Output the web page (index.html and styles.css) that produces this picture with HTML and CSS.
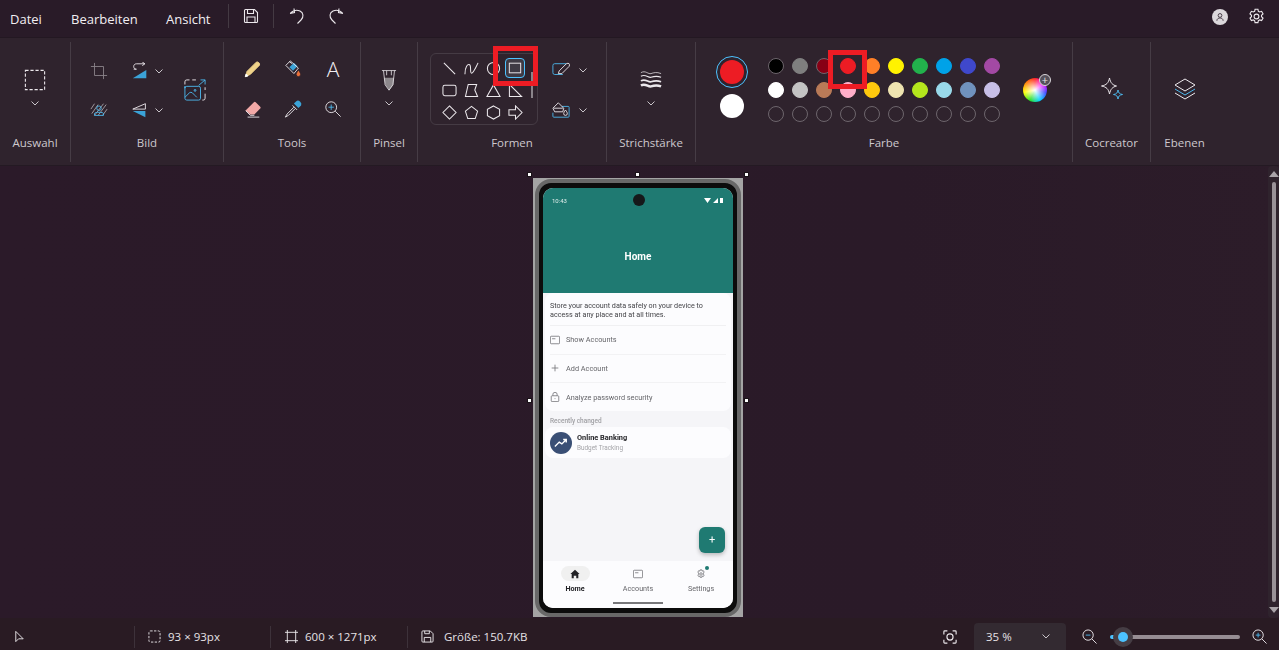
FILE: index.html
```html
<!DOCTYPE html>
<html lang="de">
<head>
    <meta charset="UTF-8">
    <meta name="viewport" content="width=device-width, initial-scale=1.0">
    <title>Paint</title>
    <link rel="stylesheet" href="styles.css">
</head>
<body>
    <div id="app">
        <header id="menu-bar">
            <nav id="menu">
                <span class="menu-item menu-file">Datei</span>
                <span class="menu-item menu-edit">Bearbeiten</span>
                <span class="menu-item menu-view">Ansicht</span>
            </nav>
            <span class="menu-divider"></span>
            <svg class="menu-icon" viewBox="0 0 16 16"><path d="M1.500 2.500a1 1 0 0 1 1-1h9l3 3v9a1 1 0 0 1-1 1h-11a1 1 0 0 1-1-1z M4.500 1.500v4h6v-4 M4 14.500v-5.500h8v5.500"/></svg>
            <span class="menu-divider"></span>
            <svg class="menu-icon undo" viewBox="0 0 16 16"><path d="M1 5.500l4.500-1-.5-4 M1.500 5c2.500-2.500 6-3.500 9.500-2 3.500 1.800 4 6 1 9l-3.500 3.500"/></svg>
            <svg class="menu-icon redo" viewBox="0 0 16 16"><path d="M15 5.500l-4.500-1 .5-4 M14.500 5c-2.500-2.500-6-3.500-9.500-2-3.500 1.800-4 6-1 9l3.500 3.500"/></svg>
            <div id="account">
                <span class="avatar">
                    <svg viewBox="0 0 16 16"><circle cx="8" cy="5.500" r="3"/><path d="M3 14c0-6 10-6 10 0"/></svg>
                </span>
                <svg class="gear" viewBox="0 0 20 20"><path d="M8.300 1.500h3.400l.5 2.400 1.500.8 2.300-.8 1.700 3-1.800 1.600v1.700l1.800 1.600-1.700 3-2.300-.8-1.500.8-.5 2.400h-3.400l-.5-2.400-1.500-.8-2.300.8-1.700-3 1.800-1.600v-1.700l-1.800-1.600 1.700-3 2.300.8 1.500-.8z"/><circle cx="10" cy="10" r="2.800"/></svg>
            </div>
        </header>

        <section id="ribbon">
            <div class="group group-select">
                <div class="group-body stack">
                    <svg class="big-icon" viewBox="0 0 24 24"><rect class="dashed" x="1.500" y="1.500" width="21" height="21"/></svg>
                    <svg class="chev" viewBox="0 0 8 5"><path d="M.5.500l3.500 3.500 3.500-3.500"/></svg>
                </div>
                <div class="group-label">Auswahl</div>
            </div>

            <div class="group group-image">
                <div class="group-body image-tools">
                    <div class="tool-grid image-grid">
                        <svg class="tool-icon dim" viewBox="0 0 20 20"><path d="M5 1v14h14 M1 5h14v14"/></svg>
                        <div class="split">
                            <svg class="tool-icon" viewBox="0 0 20 20"><path class="blue" d="M2 18l15-9v9z"/><path d="M15 2h-9c-4 0-4 6 0 6h-3 M12.500 0l3 2-3 2"/></svg>
                            <svg class="chev" viewBox="0 0 8 5"><path d="M.5.500l3.500 3.500 3.500-3.500"/></svg>
                        </div>
                        <svg class="tool-icon" viewBox="0 0 20 20"><path class="hatch" d="M2 14l7-10 M5 16l10-13 M9 16l9-12 M1 9l4-6 M14 16l5-7"/><circle class="blue-line" cx="10" cy="8" r="2.500"/><path class="blue-line" d="M5 16v-2c0-2 10-2 10 0v2z"/></svg>
                        <div class="split">
                            <svg class="tool-icon" viewBox="0 0 20 20"><path d="M2 9l14-6v6z"/><path class="blue" d="M2 11h14v7z"/></svg>
                            <svg class="chev" viewBox="0 0 8 5"><path d="M.5.500l3.500 3.500 3.500-3.500"/></svg>
                        </div>
                    </div>
                    <svg class="resize-icon" viewBox="0 0 24 24"><path class="blue-line" d="M1 8v13q0 2 2 2h13q2 0 2-2v-11q0-2-2-2h-13q-2 0-2 2z M1 20l5-5q1.500-1 3 0l3 3 2 2 M12 11.500a1 1 0 1 0 .1 0 M16 7l7-6 M18 1h5v5"/><path d="M1 6v-3q0-2 2-2h3 M9 1h4 M23 9v3 M23 16v5q0 2-2 2h-1"/></svg>
                </div>
                <div class="group-label">Bild</div>
            </div>

            <div class="group group-tools">
                <div class="group-body">
                    <div class="tool-grid tools-grid">
                        <svg class="tool-icon" viewBox="0 0 20 20"><path class="pencil" d="M1.500 18.500l2-6 10-10q1.500-1 3 .5t.5 3l-10 10z"/><path class="tip" d="M1.500 18.500l.8-3 2.200 2.200z"/></svg>
                        <svg class="tool-icon" viewBox="0 0 20 20"><path class="blue" d="M6 8l5-5 4 4-5 5z"/><path d="M2 6l5-5 9 8-5 6z M6 2l3 2"/><path class="drop" d="M16 11c-2 3-2.500 4-2.500 5a2.500 2.500 0 0 0 5 0c0-1-.5-2-2.500-5z"/></svg>
                        <span class="text-tool">A</span>
                        <svg class="tool-icon" viewBox="0 0 20 20"><path class="eraser" d="M2 11.500l9-9q1-1 2 0l5 5q1 1 0 2l-6.500 6.500h-4.500l-5-4q-1-.500 0-.500z"/><path d="M2 12l5 5h4.500 M4 19h13"/></svg>
                        <svg class="tool-icon" viewBox="0 0 20 20"><path class="blue" d="M11 4l3-3q2-1 4 1t1 4l-3 3z"/><path d="M9.500 6l5 5 M11 8l-7.500 7.500-2 3.500 3.500-2 7.500-7.500"/></svg>
                        <svg class="tool-icon" viewBox="0 0 20 20"><circle cx="8" cy="8" r="6"/><path d="M12.500 12.500l6 6"/><path class="blue-line" d="M8 5v6 M5 8h6"/></svg>
                    </div>
                </div>
                <div class="group-label">Tools</div>
            </div>

            <div class="group group-brush">
                <div class="group-body stack">
                    <svg class="big-icon" viewBox="0 0 24 28"><path class="brush-fill" d="M5.500 11h13l-1 9-5 7-5-7z"/><path d="M3 2h18 M5 2l2 18 5 7 5-7 2-18 M9 2v6 M15 2v6"/></svg>
                    <svg class="chev" viewBox="0 0 8 5"><path d="M.5.500l3.500 3.500 3.500-3.500"/></svg>
                </div>
                <div class="group-label">Pinsel</div>
            </div>

            <div class="group group-shapes">
                <div class="group-body shapes-body">
                    <div class="gallery">
                        <svg class="shape" viewBox="0 0 16 16"><path d="M2 2l12 12"/></svg>
                        <svg class="shape" viewBox="0 0 16 16"><path d="M1 14c0-8 3-11 5-10s0 9 2 9 4-5 7-11"/></svg>
                        <svg class="shape" viewBox="0 0 16 16"><circle cx="8" cy="8" r="6.500"/></svg>
                        <svg class="shape selected" viewBox="0 0 16 16"><rect x="1.500" y="2.500" width="13" height="11"/></svg>
                        <svg class="shape" viewBox="0 0 16 16"><rect x="1" y="2.500" width="14" height="11" rx="2"/></svg>
                        <svg class="shape" viewBox="0 0 16 16"><path d="M1.500 14.500l3-13h9l-2 6 3 7z"/></svg>
                        <svg class="shape" viewBox="0 0 16 16"><path d="M8 2l7 12.500h-14z"/></svg>
                        <svg class="shape" viewBox="0 0 16 16"><path d="M1.500 1.500l13 13h-13z"/></svg>
                        <svg class="shape" viewBox="0 0 16 16"><path d="M8 1l7 7-7 7-7-7z"/></svg>
                        <svg class="shape" viewBox="0 0 16 16"><path d="M8 1.500l6.500 5-2.500 8h-8l-2.500-8z"/></svg>
                        <svg class="shape" viewBox="0 0 16 16"><path d="M8 1l6.500 3.500v7l-6.500 3.500-6.500-3.500v-7z"/></svg>
                        <svg class="shape" viewBox="0 0 16 16"><path d="M1 5h7v-4l7 7-7 7v-4h-7z"/></svg>
                        <span class="gallery-bar"></span>
                    </div>
                    <div class="shape-style">
                        <div class="split">
                            <svg class="tool-icon" viewBox="0 0 20 20"><path class="blue-line" d="M12 15h-9q-2 0-2-2v-8q0-2 2-2h13"/><path d="M7 14l1-3 8-8q2-1 3 0t0 3l-8 8z"/></svg>
                            <svg class="chev" viewBox="0 0 8 5"><path d="M.5.500l3.500 3.500 3.500-3.500"/></svg>
                        </div>
                        <div class="split">
                            <svg class="tool-icon" viewBox="0 0 20 20"><path class="blue-line" d="M11 6h7q1 0 1 1v10q0 1-1 1h-16q-1 0-1-1v-4"/><path d="M1 8l6-6 6 6-1 4h-9z M2 8h10"/><path d="M15 10c-1.500 2-2 3-2 4a2 2 0 0 0 4 0c0-1-.5-2-2-4z"/></svg>
                            <svg class="chev" viewBox="0 0 8 5"><path d="M.5.500l3.500 3.500 3.500-3.500"/></svg>
                        </div>
                    </div>
                </div>
                <div class="group-label">Formen</div>
            </div>

            <div class="group group-stroke">
                <div class="group-body stack">
                    <svg class="big-icon" viewBox="0 0 24 20"><path class="w1" d="M1 2c5-3 8 2 11 1s6-2 11 0"/><path class="w2" d="M1 6c5-3 8 2 11 1s6-2 11 0"/><path class="w3" d="M1 11c5-3 8 2 11 1s6-2 11 0"/><path class="w4" d="M1 16c5-3 8 2 11 1s6-2 11 0"/></svg>
                    <svg class="chev" viewBox="0 0 8 5"><path d="M.5.500l3.500 3.500 3.500-3.500"/></svg>
                </div>
                <div class="group-label">Strichstärke</div>
            </div>

            <div class="group group-color">
                <div class="group-body color-body">
                    <div class="active-colors">
                        <span class="active-ring"><span class="active-one"></span></span>
                        <span class="active-two"></span>
                    </div>
                    <div class="palette">
                        <span class="swatch black"></span><span class="swatch gray"></span><span class="swatch darkred"></span><span class="swatch red"></span><span class="swatch orange"></span><span class="swatch yellow"></span><span class="swatch green"></span><span class="swatch sky"></span><span class="swatch indigo"></span><span class="swatch purple"></span>
                        <span class="swatch white"></span><span class="swatch silver"></span><span class="swatch brown"></span><span class="swatch pink"></span><span class="swatch gold"></span><span class="swatch cream"></span><span class="swatch lime"></span><span class="swatch ice"></span><span class="swatch steel"></span><span class="swatch lavender"></span>
                        <span class="swatch"></span><span class="swatch"></span><span class="swatch"></span><span class="swatch"></span><span class="swatch"></span><span class="swatch"></span><span class="swatch"></span><span class="swatch"></span><span class="swatch"></span><span class="swatch"></span>
                    </div>
                    <span class="wheel"><span class="wheel-plus">+</span></span>
                </div>
                <div class="group-label">Farbe</div>
            </div>

            <div class="group group-cocreator">
                <div class="group-body center">
                    <svg class="wide-icon" viewBox="0 0 24 24"><path d="M9.500 1c1 5 3 7 7 8-4 1-6 3-7 8-1-5-3-7-8-8 5-1 7-3 8-8z"/><path class="blue-line" d="M18 13c.5 3 1.500 4 4.500 4.500-3 .5-4 1.500-4.500 4.500-.5-3-1.500-4-4.500-4.500 3-.5 4-1.500 4.500-4.500z"/></svg>
                </div>
                <div class="group-label">Cocreator</div>
            </div>

            <div class="group group-layers">
                <div class="group-body center">
                    <svg class="wide-icon" viewBox="0 0 24 24"><path d="M12 2l10 6-10 6-10-6z"/><path class="blue-line" d="M2 12l10 6 10-6"/><path d="M2 16l10 6 10-6"/></svg>
                </div>
                <div class="group-label">Ebenen</div>
            </div>

            <span class="marker marker-shape"></span>
            <span class="marker marker-color"></span>
        </section>

        <main id="canvas">
            <div id="stage">
                <div class="picture">
                    <span class="handle h-tl"></span><span class="handle h-tc"></span><span class="handle h-tr"></span>
                    <span class="handle h-ml"></span><span class="handle h-mr"></span>
                    <div class="phone">
                        <div class="bezel">
                            <div class="screen">
                                <div class="app-head">
                                    <div class="status-row">
                                        <span>10:43</span>
                                        <span class="camera"></span>
                                        <svg class="status-icons" viewBox="0 0 20 7"><path d="M0 1h7l-3.500 5z M9 6l5-5v5z M16 1h3v5h-3z"/></svg>
                                    </div>
                                    <div class="app-title">Home</div>
                                </div>
                                <div class="app-body">
                                    <div class="card main-card">
                                        <p class="intro">Store your account data safely on your device to access at any place and at all times.</p>
                                        <div class="row">
                                            <svg viewBox="0 0 12 12"><rect x=".5" y="1.500" width="11" height="9" rx="1"/><path d="M2.500 4.500h4"/></svg>
                                            Show Accounts
                                        </div>
                                        <div class="row">
                                            <svg viewBox="0 0 12 12"><path d="M6 2v8 M2 6h8"/></svg>
                                            Add Account
                                        </div>
                                        <div class="row">
                                            <svg viewBox="0 0 12 12"><rect x="1.500" y="4.500" width="9" height="7" rx="1"/><path d="M3.500 4.500v-2q0-2 2.500-2t2.500 2v2 M6 7.500v1"/></svg>
                                            Analyze password security
                                        </div>
                                    </div>
                                    <div class="recent-title">Recently changed</div>
                                    <div class="card recent-card">
                                        <span class="bank-logo">
                                            <svg viewBox="0 0 16 16"><path d="M1 12l5-5 3 2 5-5 M10.500 4h3.500v3.500"/></svg>
                                        </span>
                                        <div>
                                            <div class="bank-name">Online Banking</div>
                                            <div class="bank-sub">Budget Tracking</div>
                                        </div>
                                    </div>
                                    <span class="fab">+</span>
                                </div>
                                <div class="app-nav">
                                    <div class="nav-item nav-active">
                                        <span class="nav-pill"><svg viewBox="0 0 12 12"><path class="solid" d="M6 1l5.500 5h-1.500v5h-2.500v-3h-3v3h-2.500v-5h-1.500z"/></svg></span>
                                        Home
                                    </div>
                                    <div class="nav-item">
                                        <span class="nav-pill"><svg viewBox="0 0 12 12"><rect x=".5" y="1.500" width="11" height="9" rx="1"/><path d="M2.500 4.500h4"/></svg></span>
                                        Accounts
                                    </div>
                                    <div class="nav-item">
                                        <span class="nav-pill"><svg viewBox="0 0 12 12"><path d="M5 1h2l.3 1.500 1.500-.5 1 1.700-1 1.100v1.400l1 1.100-1 1.700-1.500-.5-.3 1.500h-2l-.3-1.500-1.500.5-1-1.700 1-1.100v-1.400l-1-1.100 1-1.700 1.500.5z"/><circle cx="6" cy="6" r="1.500"/></svg><i class="nav-dot"></i></span>
                                        Settings
                                    </div>
                                </div>
                                <span class="home-bar"></span>
                            </div>
                        </div>
                    </div>
                </div>
            </div>
            <aside id="scrollbar">
                <span class="arrow-up"></span>
                <span class="scroll-thumb"></span>
                <span class="arrow-down"></span>
            </aside>
        </main>

        <footer id="status-bar">
            <div class="stat stat-cursor">
                <svg viewBox="0 0 14 14"><path d="M3 1.500v11l3-3h5z"/></svg>
            </div>
            <div class="stat stat-select">
                <svg viewBox="0 0 14 14"><rect class="dashed-small" x="1" y="1" width="12" height="12" rx="1.500"/></svg>
                <span>93 × 93px</span>
            </div>
            <div class="stat stat-canvas">
                <svg viewBox="0 0 14 14"><path d="M2.500 0v14 M11.500 0v14 M0 2.500h14 M0 11.500h14"/></svg>
                <span>600 × 1271px</span>
            </div>
            <div class="stat stat-size">
                <svg viewBox="0 0 14 14"><path d="M1 2q0-1 1-1h8l3 3v8q0 1-1 1h-10q-1 0-1-1z M4 1v3h5v-3 M3.500 13v-5h7v5"/></svg>
                <span>Größe: 150.7KB</span>
            </div>
            <div class="zoom-area">
                <svg class="focus" viewBox="0 0 16 16"><path d="M1 5v-3q0-1 1-1h3 M11 1h3q1 0 1 1v3 M15 11v3q0 1-1 1h-3 M5 15h-3q-1 0-1-1v-3"/><circle cx="8" cy="8" r="3.500"/></svg>
                <div class="zoom-select">
                    <span>35 %</span>
                    <svg class="chev" viewBox="0 0 8 5"><path d="M.5.500l3.500 3.500 3.500-3.500"/></svg>
                </div>
                <svg class="zoom-glass" viewBox="0 0 16 16"><circle cx="6.500" cy="6.500" r="5.500"/><path d="M10.500 10.500l5 5"/><path class="blue-line" d="M4 6.500h5"/></svg>
                <div class="slider">
                    <span class="slider-fill"></span>
                    <span class="slider-track"></span>
                    <span class="slider-thumb"></span>
                </div>
                <svg class="zoom-glass" viewBox="0 0 16 16"><circle cx="6.500" cy="6.500" r="5.500"/><path d="M10.500 10.500l5 5"/><path class="blue-line" d="M4 6.500h5 M6.500 4v5"/></svg>
            </div>
        </footer>
    </div>
</body>
</html>
```

FILE: styles.css
```css
* {
    box-sizing: border-box;
}

html, body {
    margin: 0;
    padding: 0;
    height: 100%;
    overflow: hidden;
}

body {
    font-family: "Open Sans", "Noto Sans", sans-serif;
    background-color: #2a1b28;
    color: #f2eef2;
}

svg {
    display: block;
    fill: none;
    stroke: #ece8ec;
    stroke-width: 1;
    flex: none;
}

#app {
    display: flex;
    flex-direction: column;
    width: 1279px;
    height: 650px;
}

/* top menu */
#menu-bar {
    display: flex;
    align-items: center;
    height: 38px;
    flex: none;
    background-color: #291b28;
    border-bottom: 1px solid #231822;
}

#menu {
    display: flex;
    padding-left: 10px;
    font-size: 13px;
}

.menu-file { width: 61px; }
.menu-edit { width: 95px; }
.menu-view { width: 62px; }

.menu-divider {
    width: 1px;
    height: 24px;
    margin-bottom: 5px;
    background-color: #443a43;
}

.menu-icon {
    width: 16px;
    height: 16px;
    margin: 0 14px 5px;
    stroke-width: 1.100;
}

.menu-icon.undo {
    margin: 0 0 5px 15px;
}

.menu-icon.redo {
    margin: 0 0 5px 23px;
}

#account {
    display: flex;
    align-items: center;
    margin-left: auto;
    padding: 0 14px 4px 0;
    gap: 20px;
}

.avatar {
    display: flex;
    align-items: center;
    justify-content: center;
    width: 16px;
    height: 16px;
    margin-left: -1px;
    border-radius: 50%;
    background-color: #dcd8dc;
}

.avatar svg {
    width: 10px;
    height: 10px;
    stroke: #4a3f49;
    stroke-width: 1.600;
}

.gear {
    width: 17px;
    height: 17px;
    stroke-width: 1.300;
}

/* ribbon */
#ribbon {
    position: relative;
    display: flex;
    height: 128px;
    flex: none;
    padding: 4px 0;
    background-color: #2f232d;
    border-bottom: 1px solid #241a23;
}

.group {
    display: flex;
    flex-direction: column;
    height: 120px;
    border-right: 1px solid #463c45;
    flex: none;
}

.group-select { width: 71px; }
.group-image { width: 153px; }
.group-tools { width: 137px; }
.group-brush { width: 57px; }
.group-shapes { width: 189px; }
.group-stroke { width: 89px; }
.group-color { width: 377px; }
.group-cocreator { width: 78px; }
.group-layers { width: 67px; border-right: none; }

.group-body {
    height: 91px;
    flex: none;
}

.group-label {
    text-align: center;
    font-size: 11.500px;
    line-height: 18px;
    color: #cdc8cd;
    margin-top: 1px;
}

.stack {
    display: flex;
    flex-direction: column;
    align-items: center;
    padding-top: 27px;
}

.big-icon {
    width: 22px;
    height: 22px;
}

.stack .chev {
    margin-top: 10px;
}

.chev {
    width: 8px;
    height: 5px;
    stroke: #c9c4c9;
}

.dashed {
    stroke-dasharray: 3.500 2;
    stroke-width: 1.200;
}

.dashed-small {
    stroke-dasharray: 2.500 1.500;
}

.tool-grid {
    display: grid;
}

.tool-icon {
    width: 18px;
    height: 18px;
}

.blue {
    fill: #3ba3d8;
    stroke: none;
}

.blue-line {
    stroke: #4cb8ec;
    fill: none;
}

.dim {
    stroke: #8a8289;
}

.hatch {
    stroke: #a9a3a8;
}

.split {
    display: flex;
    align-items: center;
    gap: 6px;
}

.image-tools {
    display: flex;
    padding: 18px 0 0 19px;
}

.image-grid {
    grid-template-columns: 41px 60px;
    grid-template-rows: 22px 22px;
    row-gap: 17px;
    align-items: center;
}

.resize-icon {
    width: 22px;
    height: 22px;
    margin-top: 19px;
    margin-left: -7px;
}

.tools-grid {
    grid-template-columns: 40px 40px 40px;
    grid-template-rows: 22px 22px;
    row-gap: 18px;
    justify-items: center;
    align-items: center;
    padding: 16px 0 0 9px;
}

.text-tool {
    font-family: "Open Sans", sans-serif;
    font-weight: 300;
    font-size: 21px;
    line-height: 22px;
}

.pencil {
    fill: #f0d38a;
    stroke: #f0d38a;
}

.tip {
    fill: #fff;
    stroke: #fff;
}

.eraser {
    fill: #f2a8a6;
    stroke: none;
}

.drop {
    fill: #e8703a;
    stroke: #2f232d;
}

.brush-fill {
    fill: #8d888c;
    stroke: none;
}

/* shapes */
.shapes-body {
    display: flex;
    padding: 11px 0 0 12px;
}

.gallery {
    position: relative;
    display: grid;
    grid-template-columns: repeat(4, 22px);
    grid-template-rows: repeat(3, 22px);
    width: 108px;
    height: 72px;
    padding: 3px 0 0 7px;
    border: 1px solid #453b44;
    border-radius: 6px;
    align-items: center;
    justify-items: center;
}

.shape {
    width: 15px;
    height: 15px;
    stroke-width: 1.100;
}

.shape.selected {
    width: 20px;
    height: 20px;
    padding: 2px;
    border: 1px solid #4cc2ff;
    border-radius: 4px;
    background-color: #3f3a44;
    overflow: visible;
}

.gallery-bar {
    position: absolute;
    right: 4px;
    top: 18px;
    width: 2px;
    height: 26px;
    background-color: #8a848a;
}

.shape-style {
    display: flex;
    flex-direction: column;
    gap: 22px;
    padding: 8px 0 0 14px;
}

.shape-style .split {
    gap: 9px;
}

/* stroke width */
.w1 { stroke-width: .8; }
.w2 { stroke-width: 1.200; }
.w3 { stroke-width: 1.800; }
.w4 { stroke-width: 2.600; }

/* colours */
.color-body {
    display: flex;
    padding-top: 14px;
}

.active-colors {
    display: flex;
    flex-direction: column;
    align-items: center;
    width: 72px;
    gap: 6px;
}

.active-ring {
    display: flex;
    align-items: center;
    justify-content: center;
    width: 32px;
    height: 32px;
    border: 1px solid #4cc2ff;
    border-radius: 50%;
}

.active-one {
    width: 24px;
    height: 24px;
    border-radius: 50%;
    background-color: #ed1c24;
}

.active-two {
    width: 24px;
    height: 24px;
    border-radius: 50%;
    background-color: #ffffff;
}

.palette {
    display: grid;
    grid-template-columns: repeat(10, 16px);
    grid-auto-rows: 16px;
    gap: 8px;
    margin-top: 2px;
}

.swatch {
    width: 16px;
    height: 16px;
    border-radius: 50%;
    border: 1px solid #6d656c;
}

.black { background-color: #000000; }
.gray { background-color: #7f7f7f; border-color: #7f7f7f; }
.darkred { background-color: #880015; }
.red { background-color: #ed1c24; border-color: #ed1c24; }
.orange { background-color: #ff7f27; border-color: #ff7f27; }
.yellow { background-color: #fff200; border-color: #fff200; }
.green { background-color: #22b14c; border-color: #22b14c; }
.sky { background-color: #00a2e8; border-color: #00a2e8; }
.indigo { background-color: #3f48cc; border-color: #3f48cc; }
.purple { background-color: #a349a4; border-color: #a349a4; }
.white { background-color: #ffffff; border-color: #ffffff; }
.silver { background-color: #c3c3c3; border-color: #c3c3c3; }
.brown { background-color: #b97a57; border-color: #b97a57; }
.pink { background-color: #ffaec9; border-color: #ffaec9; }
.gold { background-color: #ffc90e; border-color: #ffc90e; }
.cream { background-color: #efe4b0; border-color: #efe4b0; }
.lime { background-color: #b5e61d; border-color: #b5e61d; }
.ice { background-color: #99d9ea; border-color: #99d9ea; }
.steel { background-color: #7092be; border-color: #7092be; }
.lavender { background-color: #c8bfe7; border-color: #c8bfe7; }

.wheel {
    position: relative;
    width: 24px;
    height: 24px;
    margin: 22px 0 0 23px;
    border-radius: 50%;
    background:
        radial-gradient(circle, #ffffff 0, rgba(255, 255, 255, 0) 70%),
        conic-gradient(#ff2020, #ff00ff, #4040ff, #00d0ff, #20e020, #ffff00, #ff8000, #ff2020);
}

.wheel-plus {
    position: absolute;
    right: -4px;
    top: -4px;
    width: 12px;
    height: 12px;
    border-radius: 50%;
    border: 1px solid #d8d4d8;
    background-color: #55505a;
    color: #e8e4e8;
    font-size: 11px;
    line-height: 9px;
    text-align: center;
}

.center {
    display: flex;
    justify-content: center;
    padding-top: 35px;
}

.wide-icon {
    width: 24px;
    height: 24px;
}

/* red annotation boxes */
.marker {
    position: absolute;
    border: 5px solid #ed1c24;
}

.marker-shape {
    left: 493px;
    top: 8px;
    width: 45px;
    height: 40px;
}

.marker-color {
    left: 828px;
    top: 12px;
    width: 39px;
    height: 39px;
}

/* canvas */
#canvas {
    display: flex;
    flex: 1;
    min-height: 0;
    background: linear-gradient(90deg, #2b1a29 0%, #2a1a28 70%, #2c1c29 100%);
}

#stage {
    flex: 1;
    padding: 12px 0 0 533px;
}

.picture {
    position: relative;
    width: 210px;
    height: 439px;
}

.handle {
    position: absolute;
    width: 5px;
    height: 5px;
    background-color: #ffffff;
    border: 1px solid #1a1218;
}

.h-tl { left: -6px; top: -6px; }
.h-tc { left: 102px; top: -6px; }
.h-tr { right: -6px; top: -6px; }
.h-ml { left: -6px; top: 220px; }
.h-mr { right: -6px; top: 220px; }

.phone {
    width: 210px;
    height: 439px;
    padding: 1px 2px 0;
    background-color: #a4a4a4;
    filter: blur(.4px);
}

.bezel {
    height: 438px;
    padding: 5px 4px;
    border: 4px solid #686868;
    border-radius: 16px;
    background-color: #0c0c0c;
}

.screen {
    position: relative;
    display: flex;
    flex-direction: column;
    width: 190px;
    height: 420px;
    border-radius: 10px;
    overflow: hidden;
    background-color: #f5f5f8;
    font-family: Roboto, sans-serif;
    color: #55555a;
}

.app-head {
    height: 105px;
    flex: none;
    background-color: #1f7a72;
    color: #ffffff;
}

.status-row {
    display: flex;
    justify-content: space-between;
    align-items: center;
    height: 24px;
    padding: 0 9px;
    font-size: 6px;
    color: #dfecea;
}

.camera {
    width: 12px;
    height: 12px;
    margin-left: 8px;
    border-radius: 50%;
    background-color: #16181a;
}

.status-icons {
    width: 20px;
    height: 7px;
    fill: #ffffff;
    stroke: none;
}

.app-title {
    margin-top: 38px;
    text-align: center;
    font-size: 10px;
    font-weight: 700;
    line-height: 14px;
}

.app-body {
    position: relative;
    flex: 1;
    padding: 0 2px;
}

.card {
    background-color: #fcfcfe;
    border-radius: 8px;
}

.main-card {
    height: 118px;
    padding: 8px 5px 0;
}

.intro {
    margin: 0;
    height: 25px;
    font-size: 7.200px;
    line-height: 9px;
    color: #444448;
    border-bottom: 1px solid #f0f0f2;
}

.row {
    display: flex;
    align-items: center;
    gap: 6px;
    height: 28.500px;
    font-size: 7.300px;
    color: #66666a;
    border-bottom: 1px solid #f2f2f4;
}

.row:last-child {
    border-bottom: none;
}

.row svg, .nav-pill svg {
    width: 10px;
    height: 10px;
    stroke: #77777c;
}

.recent-title {
    height: 16px;
    padding: 5px 5px 0;
    font-size: 6.500px;
    font-weight: 500;
    line-height: 10px;
    color: #a0a0a4;
}

.recent-card {
    display: flex;
    align-items: center;
    gap: 5px;
    height: 31px;
    padding: 0 5px;
}

.bank-logo {
    display: flex;
    align-items: center;
    justify-content: center;
    width: 22px;
    height: 22px;
    border-radius: 50%;
    background-color: #3a4f75;
}

.bank-logo svg {
    width: 14px;
    height: 14px;
    stroke: #ffffff;
    stroke-width: 1.600;
}

.bank-name {
    font-size: 7.400px;
    font-weight: 700;
    line-height: 10px;
    color: #26262a;
}

.bank-sub {
    font-size: 6.400px;
    line-height: 10px;
    color: #a4a4a8;
}

.fab {
    position: absolute;
    right: 8px;
    bottom: 8px;
    width: 26px;
    height: 26px;
    border-radius: 6px;
    background-color: #1f7a72;
    box-shadow: 0 2px 4px rgba(0, 0, 0, .25);
    color: #ffffff;
    font-size: 11px;
    line-height: 25px;
    text-align: center;
}

.app-nav {
    display: flex;
    justify-content: space-between;
    height: 47px;
    flex: none;
    padding: 5px 3px 0;
    background-color: #fcfcfe;
}

.nav-item {
    display: flex;
    flex-direction: column;
    align-items: center;
    gap: 3px;
    width: 58px;
    font-size: 7.200px;
    color: #66666a;
}

.nav-active {
    color: #222226;
    font-weight: 700;
}

.nav-pill {
    position: relative;
    display: flex;
    align-items: center;
    justify-content: center;
    width: 29px;
    height: 15px;
    border-radius: 8px;
}

.nav-active .nav-pill {
    background-color: #f0f0f0;
}

.solid {
    fill: #222226;
    stroke: none;
}

.nav-dot {
    position: absolute;
    right: 7px;
    top: 0;
    width: 4px;
    height: 4px;
    border-radius: 50%;
    background-color: #1f7a72;
}

.home-bar {
    position: absolute;
    left: 70px;
    bottom: 4px;
    width: 50px;
    height: 2px;
    background-color: #77777a;
}

/* scrollbar */
#scrollbar {
    display: flex;
    flex-direction: column;
    align-items: center;
    width: 11px;
    padding: 5px 0 5px;
    background-color: #2f232d;
    border-radius: 4px;
}

.scroll-thumb {
    flex: 1;
    width: 4px;
    margin: 5px 0;
    border-radius: 2px;
    background-color: #9a9298;
}

.arrow-up, .arrow-down {
    width: 0;
    height: 0;
    border-left: 5px solid transparent;
    border-right: 5px solid transparent;
}

.arrow-up {
    border-bottom: 6px solid #a9a3a8;
}

.arrow-down {
    border-top: 6px solid #a9a3a8;
}

/* status bar */
#status-bar {
    display: flex;
    align-items: center;
    height: 32px;
    flex: none;
    padding-top: 5px;
    background-color: #291b23;
    font-size: 11.500px;
    color: #e6e2e6;
}

.stat {
    display: flex;
    align-items: center;
    gap: 7px;
    height: 22px;
    padding-left: 13px;
    border-right: 1px solid #3d323a;
}

.stat svg {
    width: 13px;
    height: 13px;
}

.stat-cursor { width: 135px; }
.stat-select { width: 136px; }
.stat-canvas { width: 137px; padding-left: 14px; }
.stat-size { border-right: none; gap: 10px; }

.zoom-area {
    display: flex;
    align-items: center;
    margin-left: auto;
    height: 100%;
    padding-right: 12px;
}

.focus {
    width: 14px;
    height: 14px;
    stroke-width: 1.300;
    margin-right: 17px;
}

.zoom-select {
    display: flex;
    align-items: center;
    justify-content: space-between;
    width: 92px;
    height: 27px;
    padding: 0 16px 0 12px;
    border-radius: 4px 4px 0 0;
    background-color: #332a31;
}

.zoom-glass {
    width: 15px;
    height: 15px;
}

.zoom-select + .zoom-glass {
    margin-left: 16px;
}

.slider {
    position: relative;
    display: flex;
    align-items: center;
    width: 130px;
    height: 24px;
    margin: 0 12px 0 13px;
}

.slider-fill {
    position: absolute;
    left: 0;
    width: 8px;
    height: 4px;
    border-radius: 2px;
    background-color: #4cc2ff;
}

.slider-track {
    position: absolute;
    left: 18px;
    right: 0;
    height: 4px;
    border-radius: 2px;
    background-color: #968d93;
}

.slider-thumb {
    position: absolute;
    left: 8px;
    width: 10px;
    height: 10px;
    border-radius: 50%;
    background-color: #4cc2ff;
    box-shadow: 0 0 0 5px #453d44;
}
```
